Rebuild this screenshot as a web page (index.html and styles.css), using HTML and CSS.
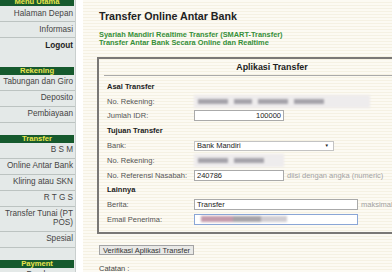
FILE: index.html
```html
<!DOCTYPE html>
<html lang="id">
    <head>
        <meta charset="utf-8" />
        <title>Transfer Online Antar Bank</title>
        <link rel="stylesheet" href="styles.css">
    </head>
    <body>
        <div id="menu">
            <div class="menuHead">Menu Utama</div>
            <div class="item">Halaman Depan</div>
            <div class="item">Informasi</div>
            <div class="item bold last">Logout</div>

            <div class="menuHead">Rekening</div>
            <div class="item">Tabungan dan Giro</div>
            <div class="item">Deposito</div>
            <div class="item">Pembiayaan</div>

            <div class="menuHead">Transfer</div>
            <div class="item">B S M</div>
            <div class="item">Online Antar Bank</div>
            <div class="item">Kliring atau SKN</div>
            <div class="item">R T G S</div>
            <div class="item">Transfer Tunai (PT POS)</div>
            <div class="item">Spesial</div>

            <div class="menuHead">Payment</div>
            <div class="item">Pembayaran</div>
        </div>
        <div id="gap"></div>
        <div id="content">
            <h1>Transfer Online Antar Bank</h1>
            <p class="intro">Syariah Mandiri Realtime Transfer (SMART-Transfer)<br>Transfer Antar Bank Secara Online dan Realtime</p>

            <div class="formBox">
                <div class="formTitle">Aplikasi Transfer</div>
                <table>
                    <tr><td colspan="2" class="group">Asal Transfer</td></tr>
                    <tr>
                        <td class="label">No. Rekening:</td>
                        <td><div class="hidden wide"><span></span><span></span><span></span><span></span></div></td>
                    </tr>
                    <tr>
                        <td class="label">Jumlah IDR:</td>
                        <td><div class="field short right">100000</div></td>
                    </tr>
                    <tr><td colspan="2" class="group">Tujuan Transfer</td></tr>
                    <tr>
                        <td class="label">Bank:</td>
                        <td><div class="field select"><span>Bank Mandiri</span><span class="arrow">&#9660;</span></div></td>
                    </tr>
                    <tr>
                        <td class="label">No. Rekening:</td>
                        <td><div class="hidden short"><span></span><span></span></div></td>
                    </tr>
                    <tr>
                        <td class="label">No. Referensi Nasabah:</td>
                        <td><div class="field short">240786</div><span class="hint">diisi dengan angka (numeric)</span></td>
                    </tr>
                    <tr><td colspan="2" class="group">Lainnya</td></tr>
                    <tr>
                        <td class="label">Berita:</td>
                        <td><div class="field long">Transfer</div><span class="hint">maksimal 30 karakter</span></td>
                    </tr>
                    <tr>
                        <td class="label">Email Penerima:</td>
                        <td><div class="field long focus"><div class="blur"><span></span><span></span><span></span></div></div></td>
                    </tr>
                </table>
            </div>

            <div class="button">Verifikasi Aplikasi Transfer</div>
            <p class="note">Catatan :</p>
        </div>
    </body>
</html>
```

FILE: styles.css
```css
body{
    margin: 0;
    display: flex;
    overflow: hidden;
    height: 272px;
    font-family: "Liberation Sans", Arial, sans-serif;
    color: #333;
    background-color: #fff;
}

#menu{
    width: 75px;
    flex: none;
    margin-top: -2px;
    background-color: #e4e9e8;
    border-right: 1px solid #c9cfce;
    font-size: 8.2px;
    line-height: 9px;
}

.menuHead{
    height: 8px;
    line-height: 8px;
    margin-right: 1px;
    background-color: #165a2e;
    color: #e9e64c;
    font-weight: bold;
    font-size: 7.6px;
    text-align: center;
    margin-top: 12px;
}

.menuHead:first-child{
    margin-top: 0;
}

.item{
    text-align: right;
    padding: 2.5px 2px 3.5px 2px;
    border-bottom: 1px solid #bcc3c1;
    color: #444;
}

.item.last{
    border-bottom: 0;
    padding-bottom: 5px;
}

.bold{
    font-weight: bold;
    color: #222;
}

#gap{
    width: 7px;
    flex: none;
    background-color: #fff;
}

#content{
    flex: 1;
    padding-left: 16px;
    background: repeating-linear-gradient(#fcfaf3 0, #fcfaf3 2px, #f5f1e3 2px, #f5f1e3 3px);
}

h1{
    margin: 10px 0 0 0;
    font-size: 10.7px;
    line-height: 12px;
    color: #222;
}

.intro{
    margin: 9px 0 0 0;
    font-size: 7.4px;
    line-height: 8px;
    font-weight: bold;
    color: #37903a;
}

.formBox{
    margin: 10px 0 0 -2px;
    width: 336px;
    padding: 0 5px 5px 5px;
    border: 2px solid #7a7876;
}

.formTitle{
    height: 16px;
    line-height: 16px;
    text-align: center;
    font-weight: bold;
    font-size: 8.9px;
    color: #222;
    border-bottom: 1px solid #aaa;
    margin-bottom: 3px;
}

table{
    border-collapse: collapse;
    font-size: 7.5px;
}

td{
    height: 14.8px;
    padding: 0;
    white-space: nowrap;
}

.label{
    width: 87px;
    padding-left: 3px;
    color: #555;
}

.group{
    padding-left: 3px;
    font-weight: bold;
    color: #222;
}

.field{
    display: inline-block;
    vertical-align: middle;
    box-sizing: border-box;
    height: 11px;
    line-height: 9px;
    padding: 0 2px;
    border: 1px solid #aaa;
    background-color: #fff;
    color: #222;
}

.short{
    width: 90px;
}

.long{
    width: 164px;
}

.right{
    text-align: right;
}

.select{
    width: 140px;
    display: inline-flex;
    justify-content: space-between;
    border-color: #c3c3c3;
    height: 10px;
    line-height: 8px;
}

.arrow{
    font-size: 4.5px;
    padding-right: 2px;
}

.focus{
    border-color: #8aa6d6;
    overflow: hidden;
}

.hint{
    margin-left: 3px;
    color: #a3a3a3;
    vertical-align: middle;
}

.hidden{
    display: inline-flex;
    vertical-align: middle;
    height: 13px;
    align-items: center;
    gap: 6px;
    padding: 0 4px;
    box-sizing: border-box;
    background-color: #eeeced;
    filter: blur(1.2px);
}

.hidden.wide{
    width: 176px;
}

.hidden span{
    height: 5px;
    width: 30px;
    background-color: #a5a3aa;
}

.hidden.wide span:nth-child(2){
    width: 18px;
}

.blur{
    display: flex;
    margin-top: 1px;
    margin-left: 4px;
    filter: blur(1.3px);
}

.blur span{
    height: 6px;
    width: 32px;
    background-color: #c49aab;
}

.blur span:nth-child(2){
    width: 28px;
    background-color: #a6a3a8;
}

.blur span:nth-child(3){
    width: 26px;
    background-color: #d0cdd2;
}

.button{
    display: inline-block;
    margin: 11px 0 0 0;
    height: 10px;
    line-height: 9px;
    padding: 0 3px;
    box-sizing: border-box;
    border: 1px solid #a3a3a3;
    background-color: #e9e9e7;
    font-size: 7.5px;
    color: #333;
}

.note{
    margin: 7px 0 0 0;
    font-size: 7.5px;
    color: #444;
}
```
